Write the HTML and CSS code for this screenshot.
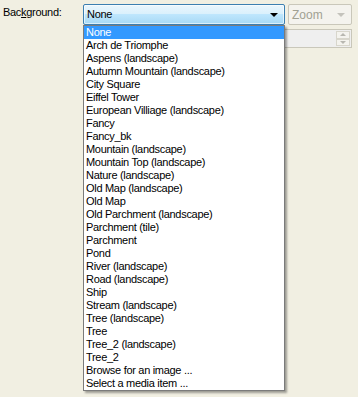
FILE: index.html
```html
<!DOCTYPE html>
<html>
<head>
<meta charset="utf-8">
<link rel="stylesheet" href="styles.css">
</head>
<body>
<div class="panel">
  <div class="row1">
    <label class="lbl">Bac<u>k</u>ground:</label>
    <div class="combo">
      <span class="combo-text">None</span>
      <span class="arrow"></span>
    </div>
    <div class="zoom">
      <span class="zoom-text">Zoom</span>
      <span class="zoom-arrow"></span>
    </div>
  </div>
  <div class="row2">
    <div class="spin">
      <div class="spin-btns">
        <div class="spin-btn"><span class="up"></span></div>
        <div class="spin-btn"><span class="down"></span></div>
      </div>
    </div>
  </div>
  <ul class="list">
    <li class="sel">None</li>
    <li>Arch de Triomphe</li>
    <li>Aspens (landscape)</li>
    <li>Autumn Mountain (landscape)</li>
    <li>City Square</li>
    <li>Eiffel Tower</li>
    <li>European Villiage (landscape)</li>
    <li>Fancy</li>
    <li>Fancy_bk</li>
    <li>Mountain (landscape)</li>
    <li>Mountain Top (landscape)</li>
    <li>Nature (landscape)</li>
    <li>Old Map (landscape)</li>
    <li>Old Map</li>
    <li>Old Parchment (landscape)</li>
    <li>Parchment (tile)</li>
    <li>Parchment</li>
    <li>Pond</li>
    <li>River (landscape)</li>
    <li>Road (landscape)</li>
    <li>Ship</li>
    <li>Stream (landscape)</li>
    <li>Tree (landscape)</li>
    <li>Tree</li>
    <li>Tree_2 (landscape)</li>
    <li>Tree_2</li>
    <li>Browse for an image ...</li>
    <li>Select a media item ...</li>
  </ul>
</div>
</body>
</html>
```
FILE: styles.css
```css
html, body {
  margin: 0;
  padding: 0;
  background: #f1efe2;
  width: 358px;
  height: 397px;
  overflow: hidden;
}
.panel {
  position: relative;
  font-family: "Liberation Sans", Arial, sans-serif;
  font-size: 11px;
  letter-spacing: -0.3px;
  color: #000;
  padding-top: 4px;
}
.row1 {
  display: flex;
  align-items: flex-start;
  height: 21px;
}
.lbl {
  width: 80px;
  padding-left: 3px;
  line-height: 17px;
}
.combo {
  position: relative;
  box-sizing: border-box;
  width: 202px;
  height: 21px;
  border: 1px solid #3c7fb1;
  border-radius: 2px;
  background: linear-gradient(#eaf6fd 0%, #d9f0fc 50%, #bee6fd 50%, #a7d9f5 100%);
  box-shadow: inset 0 0 0 1px rgba(255,255,255,0.6);
  display: flex;
  align-items: center;
}
.combo-text {
  padding-left: 3px;
  line-height: 19px;
}
.arrow {
  position: absolute;
  right: 6px;
  top: 8px;
  width: 0;
  height: 0;
  border-left: 4px solid transparent;
  border-right: 4px solid transparent;
  border-top: 4px solid #000;
}
.zoom {
  position: relative;
  box-sizing: border-box;
  margin-left: 3px;
  width: 64px;
  height: 21px;
  border: 1px solid #c9c7ba;
  border-radius: 2px;
  background: #f4f3ee;
  display: flex;
  align-items: center;
}
.zoom-text {
  padding-left: 3px;
  color: #a1a192;
  font-size: 12px;
  letter-spacing: 0;
}
.zoom-arrow {
  position: absolute;
  right: 6px;
  top: 8px;
  width: 0;
  height: 0;
  border-left: 4px solid transparent;
  border-right: 4px solid transparent;
  border-top: 4px solid #c4c3bc;
}
.row2 {
  display: flex;
  padding-top: 4px;
  padding-left: 200px;
}
.spin {
  box-sizing: border-box;
  width: 152px;
  height: 19px;
  border: 1px solid #c9c7ba;
  background: #efefef;
  display: flex;
  justify-content: flex-end;
  padding: 1px;
}
.spin-btns {
  display: flex;
  flex-direction: column;
  width: 14px;
}
.spin-btn {
  flex: 1;
  box-sizing: border-box;
  border: 1px solid #d8d6cc;
  background: #f4f3ee;
  display: flex;
  align-items: center;
  justify-content: center;
}
.up, .down {
  width: 0;
  height: 0;
  border-left: 3px solid transparent;
  border-right: 3px solid transparent;
}
.up { border-bottom: 3px solid #b8b7b0; }
.down { border-top: 3px solid #b8b7b0; }
.list {
  position: absolute;
  left: 83px;
  top: 25px;
  box-sizing: border-box;
  width: 202px;
  margin: 0;
  padding: 0;
  list-style: none;
  background: #fff;
  border: 1px solid #7b7b7b;
  box-shadow: 2px 2px 2px rgba(0,0,0,0.35);
}
.list li {
  height: 13px;
  line-height: 13px;
  padding-left: 2px;
  white-space: nowrap;
}
.list li.sel {
  background: #3399ff;
  color: #fff;
}
```
